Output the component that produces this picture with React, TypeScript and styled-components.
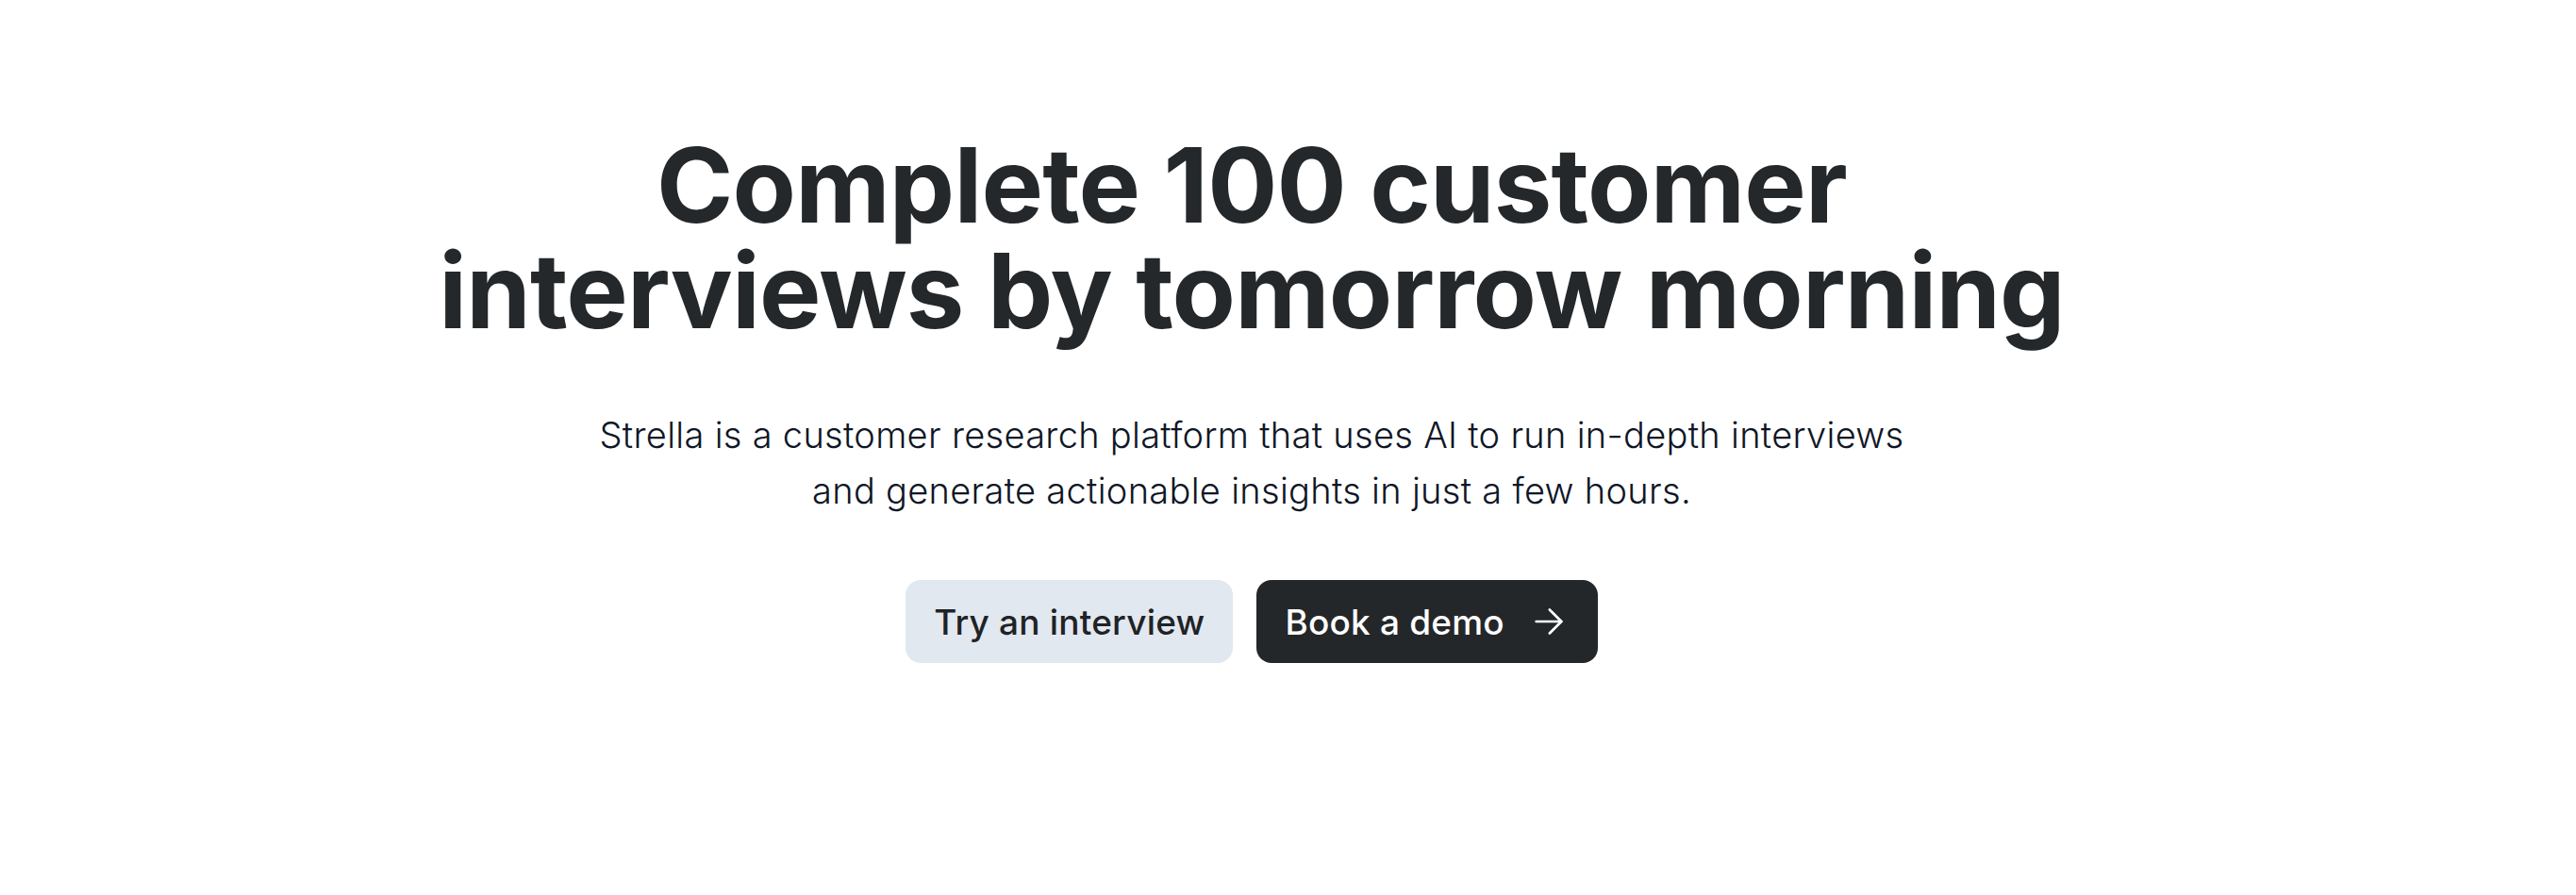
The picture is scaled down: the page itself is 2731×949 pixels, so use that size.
import styled, { createGlobalStyle } from "styled-components";

const GlobalStyle = createGlobalStyle`
  html, body {
    margin: 0;
    padding: 0;
    background: #ffffff;
  }
  body {
    font-family: Inter, "Noto Sans", sans-serif;
  }
`;

const Page = styled.main`
  width: calc(100% - 77px);
  min-height: 949px;
  display: flex;
  flex-direction: column;
  align-items: center;
  padding-top: 140px;
  box-sizing: border-box;
`;

const Title = styled.h1`
  margin: 0;
  font-family: Inter, "Noto Sans", sans-serif;
  font-weight: 700;
  font-size: 110px;
  line-height: 112px;
  letter-spacing: -0.8px;
  color: #25282b;
  text-align: center;
`;

const Lead = styled.p`
  margin: 68px 0 0;
  font-family: Inter, "Noto Sans", sans-serif;
  font-weight: 300;
  font-size: 38px;
  line-height: 59px;
  letter-spacing: 0.3px;
  color: #0f1626;
  text-align: center;
`;

const Actions = styled.div`
  display: flex;
  gap: 25px;
  margin-top: 65px;
`;

const Button = styled.a<{ $dark?: boolean }>`
  display: inline-flex;
  align-items: center;
  gap: 27px;
  height: 88px;
  padding: ${(p) => (p.$dark ? "0 32px 0 30px" : "0 30px")};
  box-sizing: border-box;
  border-radius: 16px;
  font-family: Inter, "Noto Sans", sans-serif;
  font-weight: 500;
  font-size: 37px;
  letter-spacing: 0.2px;
  text-decoration: none;
  cursor: pointer;
  background: ${(p) => (p.$dark ? "#24272a" : "#e2e8f0")};
  color: ${(p) => (p.$dark ? "#ffffff" : "#1f2326")};
`;

const Arrow = () => (
  <svg width="40" height="40" viewBox="0 0 24 24" fill="none" stroke="currentColor" strokeWidth="1.6" strokeLinecap="round" strokeLinejoin="round">
    <path d="M4 12h16" />
    <path d="M12.5 4.5L20 12l-7.5 7.5" />
  </svg>
);

export default function App() {
  return (
    <>
      <GlobalStyle />
      <Page>
        <Title>
          Complete 100 customer
          <br />
          interviews by tomorrow morning
        </Title>
        <Lead>
          Strella is a customer research platform that uses AI to run in-depth interviews
          <br />
          and generate actionable insights in just a few hours.
        </Lead>
        <Actions>
          <Button>Try an interview</Button>
          <Button $dark>
            Book a demo
            <Arrow />
          </Button>
        </Actions>
      </Page>
    </>
  );
}
